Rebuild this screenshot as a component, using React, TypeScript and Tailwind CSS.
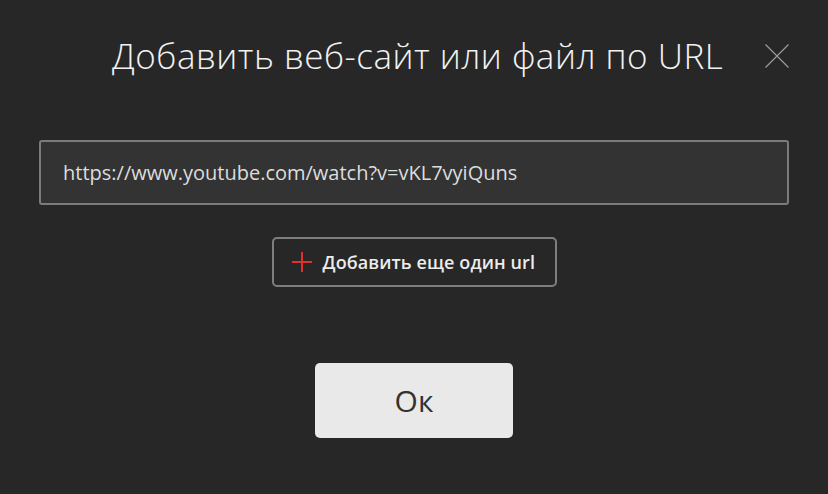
import React from 'react';

export default function App() {
  return (
    <div className="w-[828px] h-[494px] bg-[#272727] flex flex-col items-center overflow-hidden" style={{ fontFamily: '"Open Sans", "Noto Sans", sans-serif' }}>
      <div className="w-full flex items-center pt-[33px] pl-[112px] pr-[39px]">
        <h1 className="flex-1 text-[35px] leading-[46px] font-light text-[#f2f2f2] tracking-[0.5px]">
          Добавить веб-сайт или файл по URL
        </h1>
        <button className="w-[24px] h-[24px] flex items-center justify-center">
          <svg width="24" height="24" viewBox="0 0 24 24" fill="none" stroke="#9a9a9a" strokeWidth="1.2">
            <path d="M0.5 0.5 L23.5 23.5 M23.5 0.5 L0.5 23.5" />
          </svg>
        </button>
      </div>

      <div className="mt-[61px] w-[750px] h-[65px] rounded-[3px] border-2 border-[#7b7b7b] bg-[#333333] flex items-center px-[22px]">
        <span className="text-[20px] text-[#dddddd]">https://www.youtube.com/watch?v=vKL7vyiQuns</span>
      </div>

      <button className="mt-[32px] w-[285px] h-[50px] rounded-[5px] border-2 border-[#7e7e7e] flex items-center pl-[18px] gap-[11px]">
        <svg width="20" height="20" viewBox="0 0 20 20" stroke="#e52e2e" strokeWidth="2">
          <path d="M10 0 V20 M0 10 H20" />
        </svg>
        <span className="text-[18px] font-semibold text-[#ececec] tracking-[0.1px]">Добавить еще один url</span>
      </button>

      <button className="mt-[76px] w-[198px] h-[75px] rounded-[5px] bg-[#e9e9e9] flex items-center justify-center">
        <span className="text-[30px] text-[#333333]">Ок</span>
      </button>
    </div>
  );
}
